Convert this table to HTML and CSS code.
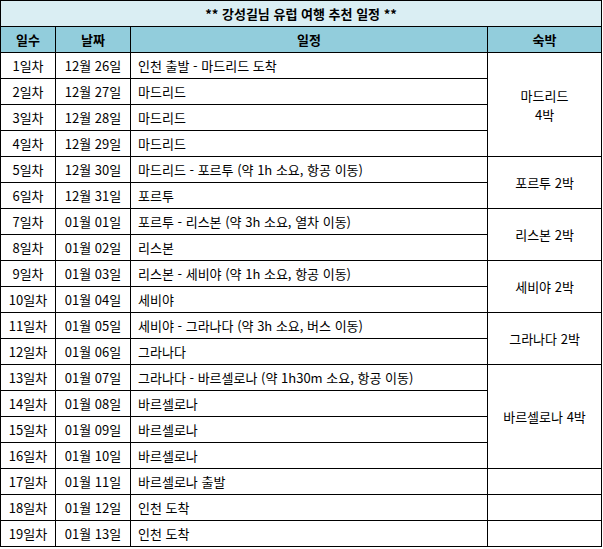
FILE: index.html
```html
<!DOCTYPE html>
<html lang="ko">
<head>
<meta charset="utf-8">
<title>강성길님 유럽 여행 추천 일정</title>
<link rel="stylesheet" href="styles.css">
</head>
<body>
<table class="plan">
  <colgroup>
    <col class="c-day">
    <col class="c-date">
    <col class="c-plan">
    <col class="c-stay">
  </colgroup>
  <tr class="title-row"><td colspan="4">** 강성길님 유럽 여행 추천 일정 **</td></tr>
  <tr class="head-row"><th>일수</th><th>날짜</th><th>일정</th><th>숙박</th></tr>
  <tr><td class="ctr">1일차</td><td class="ctr">12월 26일</td><td class="txt">인천 출발 - 마드리드 도착</td><td class="ctr stay2" rowspan="4">마드리드<br>4박</td></tr>
  <tr><td class="ctr">2일차</td><td class="ctr">12월 27일</td><td class="txt">마드리드</td></tr>
  <tr><td class="ctr">3일차</td><td class="ctr">12월 28일</td><td class="txt">마드리드</td></tr>
  <tr><td class="ctr">4일차</td><td class="ctr">12월 29일</td><td class="txt">마드리드</td></tr>
  <tr><td class="ctr">5일차</td><td class="ctr">12월 30일</td><td class="txt">마드리드 - 포르투 (약 1h 소요, 항공 이동)</td><td class="ctr" rowspan="2">포르투 2박</td></tr>
  <tr><td class="ctr">6일차</td><td class="ctr">12월 31일</td><td class="txt">포르투</td></tr>
  <tr><td class="ctr">7일차</td><td class="ctr">01월 01일</td><td class="txt">포르투 - 리스본 (약 3h 소요, 열차 이동)</td><td class="ctr" rowspan="2">리스본 2박</td></tr>
  <tr><td class="ctr">8일차</td><td class="ctr">01월 02일</td><td class="txt">리스본</td></tr>
  <tr><td class="ctr">9일차</td><td class="ctr">01월 03일</td><td class="txt">리스본 - 세비야 (약 1h 소요, 항공 이동)</td><td class="ctr" rowspan="2">세비야 2박</td></tr>
  <tr><td class="ctr">10일차</td><td class="ctr">01월 04일</td><td class="txt">세비야</td></tr>
  <tr><td class="ctr">11일차</td><td class="ctr">01월 05일</td><td class="txt">세비야 - 그라나다 (약 3h 소요, 버스 이동)</td><td class="ctr" rowspan="2">그라나다 2박</td></tr>
  <tr><td class="ctr">12일차</td><td class="ctr">01월 06일</td><td class="txt">그라나다</td></tr>
  <tr><td class="ctr">13일차</td><td class="ctr">01월 07일</td><td class="txt">그라나다 - 바르셀로나 (약 1h30m 소요, 항공 이동)</td><td class="ctr" rowspan="4">바르셀로나 4박</td></tr>
  <tr><td class="ctr">14일차</td><td class="ctr">01월 08일</td><td class="txt">바르셀로나</td></tr>
  <tr><td class="ctr">15일차</td><td class="ctr">01월 09일</td><td class="txt">바르셀로나</td></tr>
  <tr><td class="ctr">16일차</td><td class="ctr">01월 10일</td><td class="txt">바르셀로나</td></tr>
  <tr><td class="ctr">17일차</td><td class="ctr">01월 11일</td><td class="txt">바르셀로나 출발</td><td></td></tr>
  <tr><td class="ctr">18일차</td><td class="ctr">01월 12일</td><td class="txt">인천 도착</td><td></td></tr>
  <tr><td class="ctr">19일차</td><td class="ctr">01월 13일</td><td class="txt">인천 도착</td><td></td></tr>
</table>
</body>
</html>
```

FILE: styles.css
```css
html, body {
  margin: 0;
  padding: 0;
  background: #ffffff;
}

.plan {
  border-collapse: collapse;
  table-layout: fixed;
  width: 601px;
  font-family: "Noto Sans CJK KR", "Noto Sans", sans-serif;
  font-size: 13px;
  line-height: 17px;
  color: #000000;
}

.c-day { width: 55px; }
.c-date { width: 75px; }
.c-plan { width: 357px; }
.c-stay { width: 114px; }

.plan td,
.plan th {
  border: 1px solid #000000;
  height: 26px;
  padding: 0 7px;
  box-sizing: border-box;
  vertical-align: middle;
  white-space: nowrap;
}

.title-row td {
  background: #daeef3;
  text-align: center;
  font-weight: bold;
}

.head-row th {
  background: #92cddc;
  text-align: center;
  font-weight: bold;
}

.plan td.ctr {
  text-align: center;
  padding: 0 2px;
}

.plan td.stay2 {
  line-height: 19px;
}

.txt {
  text-align: left;
}
```
